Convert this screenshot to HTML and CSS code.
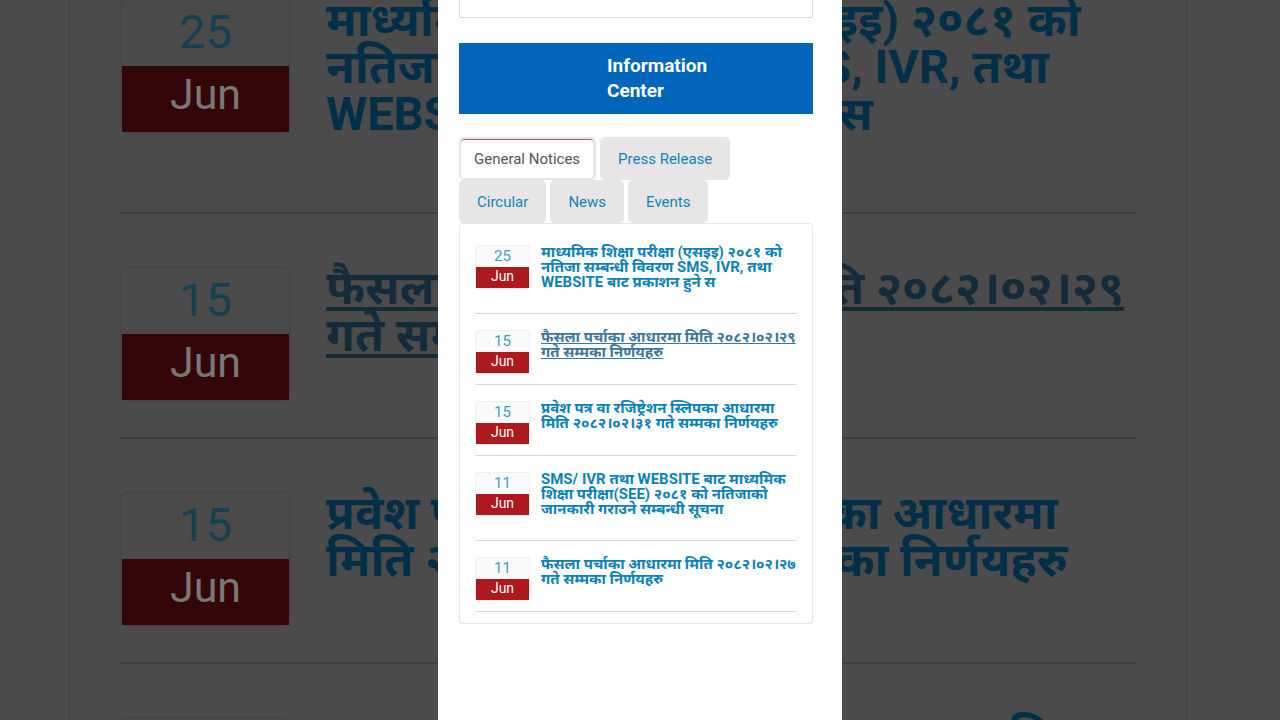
FILE: index.html
```
<!DOCTYPE html>
<html lang="en">
<head>
    <meta charset="UTF-8">
    <meta name="viewport" content="width=device-width, initial-scale=1.0">
    <title>Information Center</title>
    <link rel="stylesheet" href="styles.css">
</head>
<body>

<div class="backdrop" aria-hidden="true">
    <div class="notices large">
        <div class="notice">
            <div class="date"><span class="day">25</span><span class="month">Jun</span></div>
            <div class="title">माध्यमिक शिक्षा परीक्षा (एसइइ) २०८१ को<br>नतिजा सम्बन्धी विवरण SMS, IVR, तथा<br>WEBSITE बाट प्रकाशन हुने स</div>
        </div>
        <div class="notice">
            <div class="date"><span class="day">15</span><span class="month">Jun</span></div>
            <div class="title visited">फैसला पर्चाका आधारमा मिति २०८२।०२।२९<br>गते सम्मका निर्णयहरु</div>
        </div>
        <div class="notice">
            <div class="date"><span class="day">15</span><span class="month">Jun</span></div>
            <div class="title">प्रवेश पत्र वा रजिष्ट्रेशन स्लिपका आधारमा<br>मिति २०८२।०२।३१ गते सम्मका निर्णयहरु</div>
        </div>
        <div class="notice">
            <div class="date"><span class="day">11</span><span class="month">Jun</span></div>
            <div class="title">SMS/ IVR तथा WEBSITE बाट माध्यमिक<br>शिक्षा परीक्षा(SEE) २०८१ को नतिजाको<br>जानकारी गराउने सम्बन्धी सूचना</div>
        </div>
    </div>
</div>

<main class="phone">
    <div class="previous-box"></div>

    <h2 class="banner"><span>Information Center</span></h2>

    <div class="tabs" role="tablist">
        <button type="button" class="tab active" role="tab" aria-selected="true">General Notices</button>
        <button type="button" class="tab" role="tab">Press Release</button>
        <button type="button" class="tab" role="tab">Circular</button>
        <button type="button" class="tab" role="tab">News</button>
        <button type="button" class="tab" role="tab">Events</button>
    </div>

    <div class="notices">
        <div class="notice">
            <div class="date"><span class="day">25</span><span class="month">Jun</span></div>
            <a href="#" class="title">माध्यमिक शिक्षा परीक्षा (एसइइ) २०८१ को<br>नतिजा सम्बन्धी विवरण SMS, IVR, तथा<br>WEBSITE बाट प्रकाशन हुने स</a>
        </div>
        <div class="notice">
            <div class="date"><span class="day">15</span><span class="month">Jun</span></div>
            <a href="#" class="title visited">फैसला पर्चाका आधारमा मिति २०८२।०२।२९<br>गते सम्मका निर्णयहरु</a>
        </div>
        <div class="notice">
            <div class="date"><span class="day">15</span><span class="month">Jun</span></div>
            <a href="#" class="title">प्रवेश पत्र वा रजिष्ट्रेशन स्लिपका आधारमा<br>मिति २०८२।०२।३१ गते सम्मका निर्णयहरु</a>
        </div>
        <div class="notice">
            <div class="date"><span class="day">11</span><span class="month">Jun</span></div>
            <a href="#" class="title">SMS/ IVR तथा WEBSITE बाट माध्यमिक<br>शिक्षा परीक्षा(SEE) २०८१ को नतिजाको<br>जानकारी गराउने सम्बन्धी सूचना</a>
        </div>
        <div class="notice">
            <div class="date"><span class="day">11</span><span class="month">Jun</span></div>
            <a href="#" class="title">फैसला पर्चाका आधारमा मिति २०८२।०२।२७<br>गते सम्मका निर्णयहरु</a>
        </div>
    </div>
</main>

</body>
</html>
```
FILE: styles.css
```
* {
    box-sizing: border-box;
}

body {
    margin: 0;
    min-height: 100vh;
    display: flex;
    justify-content: center;
    background-color: #4b4b4b;
    font-family: Roboto, "Noto Sans", sans-serif;
    position: relative;
    overflow: hidden;
}

.phone {
    position: relative;
    width: 404px;
    max-width: 100%;
    padding: 0 29px 20px 21px;
    background-color: #fff;
}

.previous-box {
    height: 18px;
    border: 1px solid #dcdcdc;
    border-top: none;
}

.banner {
    display: flex;
    justify-content: center;
    margin: 25px 0 23px;
    padding: 10px 0 11px 42px;
    background-color: #0066bb;
    color: #fff;
    font-size: 19px;
    line-height: 25px;
    font-weight: 700;
}

.banner span {
    width: 100px;
}

/* tabs */
.tabs {
    display: flex;
    flex-wrap: wrap;
    column-gap: 4px;
    padding-right: 40px;
}

.tab {
    height: 43px;
    padding: 0 18px;
    border: none;
    border-radius: 5px;
    background-color: #e7e5e6;
    color: #1283bd;
    font-family: inherit;
    font-size: 15px;
}

.tab.active {
    padding: 0 13px;
    border: 2px solid #e7e5e6;
    border-right-width: 3px;
    background-color: #fff;
    box-shadow: inset 0 1px #9a6468;
    color: #555;
}

/* notice list */
.notices {
    padding: 5px 15px 11px;
    border: 1px solid #e6e6e6;
    border-radius: 3px;
}

.notice {
    display: flex;
    align-items: flex-start;
    gap: 11px;
    padding-top: 16px;
    border-bottom: 1px solid #d8d8d8;
}

.date {
    flex: none;
    width: 55px;
    margin-bottom: 10px;
    border: 1px solid #eee;
    border-radius: 3px;
    background-color: #f9f9f9;
    text-align: center;
    font-size: 15px;
}

.day,
.month {
    display: block;
    height: 21px;
    line-height: 21px;
}

.day {
    color: #3aa0bf;
}

.month {
    background-color: #ad191d;
    color: #fff;
    font-size: 14px;
    line-height: 18px;
}

.title {
    padding-bottom: 23px;
    color: #0a82b8;
    font-size: 15px;
    line-height: 15px;
    font-weight: 700;
    white-space: nowrap;
    text-decoration: none;
}

.title.visited {
    color: #3c789d;
    text-decoration: underline;
}

/* enlarged dark copy behind the phone */
.backdrop {
    position: absolute;
    inset: 0;
    overflow: hidden;
}

.large {
    margin: -73px 92px 0 68px;
    padding: 17px 50px 0;
    border: 2px solid #454545;
}

.large .notice {
    gap: 35px;
    padding-top: 52px;
    border-bottom: 2px solid #3c3c3c;
}

.large .date {
    width: 171px;
    margin-bottom: 35px;
    border: 2px solid #464646;
    border-radius: 8px;
    background-color: #4a4a4b;
    font-size: 47px;
}

.large .day,
.large .month {
    height: 66px;
    line-height: 64px;
}

.large .day {
    color: #15404f;
}

.large .month {
    background-color: #340608;
    color: #777;
    font-size: 43px;
    line-height: 56px;
}

.large .title {
    margin-top: -2px;
    padding-bottom: 75px;
    color: #002f47;
    font-size: 47px;
    line-height: 47px;
}

.large .title.visited {
    color: #142b3a;
}
```
